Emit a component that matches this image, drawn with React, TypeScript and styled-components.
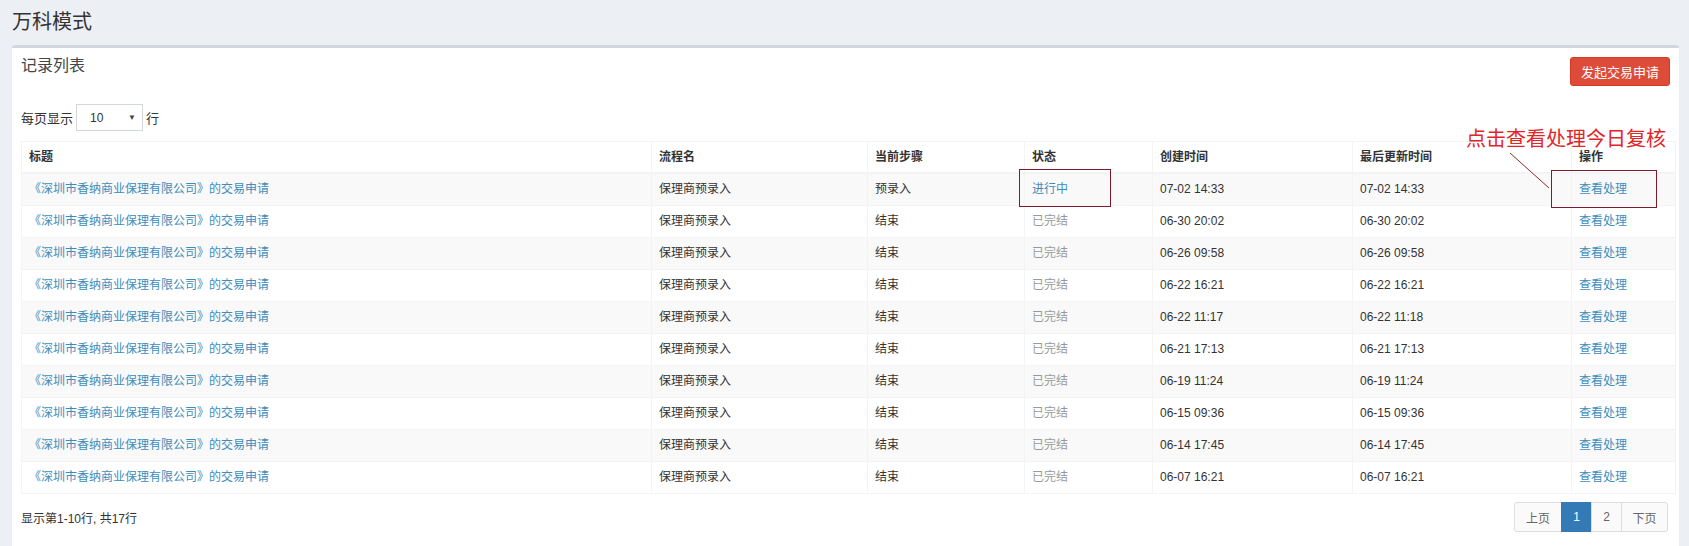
import React from 'react';
import styled, { createGlobalStyle } from 'styled-components';

// ============================================================================
// DATA
// ============================================================================

interface Record {
  step: string;
  status: 'running' | 'done';
  created: string;
  updated: string;
}

const RECORDS: Record[] = [
  { step: '预录入', status: 'running', created: '07-02 14:33', updated: '07-02 14:33' },
  { step: '结束', status: 'done', created: '06-30 20:02', updated: '06-30 20:02' },
  { step: '结束', status: 'done', created: '06-26 09:58', updated: '06-26 09:58' },
  { step: '结束', status: 'done', created: '06-22 16:21', updated: '06-22 16:21' },
  { step: '结束', status: 'done', created: '06-22 11:17', updated: '06-22 11:18' },
  { step: '结束', status: 'done', created: '06-21 17:13', updated: '06-21 17:13' },
  { step: '结束', status: 'done', created: '06-19 11:24', updated: '06-19 11:24' },
  { step: '结束', status: 'done', created: '06-15 09:36', updated: '06-15 09:36' },
  { step: '结束', status: 'done', created: '06-14 17:45', updated: '06-14 17:45' },
  { step: '结束', status: 'done', created: '06-07 16:21', updated: '06-07 16:21' },
];

const COLUMNS = [
  { label: '标题', width: 630 },
  { label: '流程名', width: 216 },
  { label: '当前步骤', width: 157 },
  { label: '状态', width: 128 },
  { label: '创建时间', width: 200 },
  { label: '最后更新时间', width: 219 },
  { label: '操作', width: 104 },
];

// ============================================================================
// STYLED COMPONENTS
// ============================================================================

const GlobalStyle = createGlobalStyle`
  html, body {
    margin: 0;
    padding: 0;
    background: #ecf0f5;
    font-family: "Liberation Sans", "Noto Sans CJK SC", sans-serif;
    color: #333;
  }
`;

const Page = styled.div`
  position: relative;
  width: 1689px;
  height: 546px;
  overflow: hidden;
  padding: 0 10px 0 12px;
  box-sizing: border-box;
`;

const PageTitle = styled.h1`
  margin: 0;
  height: 45px;
  line-height: 44px;
  font-size: 20px;
  font-weight: normal;
  color: #333;
`;

const Box = styled.div`
  width: 1667px;
  min-height: 520px;
  background: #fff;
  border-top: 3px solid #d2d6de;
  border-radius: 3px;
  box-shadow: 0 1px 1px rgba(0, 0, 0, 0.1);
  padding: 0 4px 0 9px;
  box-sizing: border-box;
`;

const BoxHeader = styled.div`
  display: flex;
  justify-content: space-between;
  align-items: flex-start;
  padding-top: 7px;
`;

const BoxTitle = styled.h3`
  margin: 0;
  font-size: 16px;
  line-height: 21px;
  font-weight: normal;
  color: #444;
`;

const DangerButton = styled.button`
  margin: 2px 5px 0 0;
  height: 29px;
  padding: 0 10px;
  background: #dd4b39;
  border: 1px solid #d73925;
  border-radius: 3px;
  color: #fff;
  font-family: inherit;
  font-size: 13px;
`;

const LengthRow = styled.div`
  display: flex;
  align-items: center;
  gap: 3px;
  margin-top: 18px;
  height: 27px;
  font-size: 13px;
`;

const SelectBox = styled.div`
  display: flex;
  align-items: center;
  justify-content: space-between;
  width: 67px;
  height: 27px;
  padding: 0 6px 0 13px;
  box-sizing: border-box;
  border: 1px solid #d2d6de;
  font-size: 12px;
  color: #333;
`;

const Caret = styled.span`
  font-size: 8px;
  color: #444;
`;

const Table = styled.table`
  margin-top: 10px;
  width: 1654px;
  table-layout: fixed;
  border-collapse: collapse;
  border: 1px solid #f4f4f4;
  font-size: 12px;
`;

const Th = styled.th`
  text-align: left;
  font-weight: bold;
  color: #333;
  line-height: 17px;
  padding: 7px 7px 6px;
  border: 1px solid #f4f4f4;
  border-bottom: 2px solid #f4f4f4;
`;

const Tr = styled.tr<{ $striped: boolean }>`
  background: ${({ $striped }) => ($striped ? '#f9f9f9' : '#fff')};
`;

const Td = styled.td`
  line-height: 17px;
  padding: 7px 7px;
  border: 1px solid #f4f4f4;
  color: #333;
  white-space: nowrap;
`;

const Link = styled.a`
  color: #3c8dbc;
  text-decoration: none;
`;

const Muted = styled.span`
  color: #999;
`;

const Footer = styled.div`
  display: flex;
  justify-content: space-between;
  align-items: center;
  margin-top: 8px;
  padding-right: 7px;
  font-size: 12px;
`;

const Pagination = styled.ul`
  display: flex;
  margin: 0;
  padding: 0;
  list-style: none;
`;

const PageItem = styled.li<{ $active?: boolean; $w: number }>`
  width: ${({ $w }) => $w}px;
  height: 30px;
  box-sizing: border-box;
  display: flex;
  align-items: center;
  justify-content: center;
  font-size: 12px;
  color: ${({ $active }) => ($active ? '#fff' : '#666')};
  background: ${({ $active }) => ($active ? '#337ab7' : '#fafafa')};
  border: 1px solid ${({ $active }) => ($active ? '#337ab7' : '#ddd')};
  margin-left: -1px;

  &:first-child {
    margin-left: 0;
    border-radius: 3px 0 0 3px;
  }

  &:last-child {
    border-radius: 0 3px 3px 0;
  }
`;

// Annotation overlay (red callouts drawn over the screenshot)
const MarkBox = styled.div`
  position: absolute;
  border: 1px solid #7b1c2c;
  box-sizing: border-box;
`;

const MarkText = styled.div`
  position: absolute;
  left: 1466px;
  top: 126px;
  font-size: 20px;
  line-height: 24px;
  color: #e1262b;
  white-space: nowrap;
  font-family: "Noto Sans CJK SC", sans-serif;
`;

const MarkLine = styled.svg`
  position: absolute;
  left: 1505px;
  top: 150px;
  overflow: visible;
`;

// ============================================================================
// COMPONENT
// ============================================================================

export default function App() {
  return (
    <>
      <GlobalStyle />
      <Page>
        <PageTitle>万科模式</PageTitle>

        <Box>
          <BoxHeader>
            <BoxTitle>记录列表</BoxTitle>
            <DangerButton>发起交易申请</DangerButton>
          </BoxHeader>

          <LengthRow>
            每页显示
            <SelectBox>
              <span>10</span>
              <Caret>▼</Caret>
            </SelectBox>
            行
          </LengthRow>

          <Table>
            <colgroup>
              {COLUMNS.map((c) => (
                <col key={c.label} style={{ width: c.width }} />
              ))}
            </colgroup>
            <thead>
              <tr>
                {COLUMNS.map((c) => (
                  <Th key={c.label}>{c.label}</Th>
                ))}
              </tr>
            </thead>
            <tbody>
              {RECORDS.map((r, i) => (
                <Tr key={i} $striped={i % 2 === 0}>
                  <Td>
                    <Link>《深圳市香纳商业保理有限公司》的交易申请</Link>
                  </Td>
                  <Td>保理商预录入</Td>
                  <Td>{r.step}</Td>
                  <Td>
                    {r.status === 'running' ? <Link>进行中</Link> : <Muted>已完结</Muted>}
                  </Td>
                  <Td>{r.created}</Td>
                  <Td>{r.updated}</Td>
                  <Td>
                    <Link>查看处理</Link>
                  </Td>
                </Tr>
              ))}
            </tbody>
          </Table>

          <Footer>
            <span>显示第1-10行, 共17行</span>
            <Pagination>
              <PageItem $w={48}>上页</PageItem>
              <PageItem $w={31} $active>1</PageItem>
              <PageItem $w={31}>2</PageItem>
              <PageItem $w={47}>下页</PageItem>
            </Pagination>
          </Footer>
        </Box>

        {/* callouts */}
        <MarkBox style={{ left: 1019, top: 169, width: 92, height: 38 }} />
        <MarkBox style={{ left: 1551, top: 170, width: 106, height: 38 }} />
        <MarkText>点击查看处理今日复核</MarkText>
        <MarkLine width="50" height="40">
          <line x1="5" y1="3" x2="44" y2="38" stroke="#8b2a2a" strokeWidth="1" />
        </MarkLine>
      </Page>
    </>
  );
}
